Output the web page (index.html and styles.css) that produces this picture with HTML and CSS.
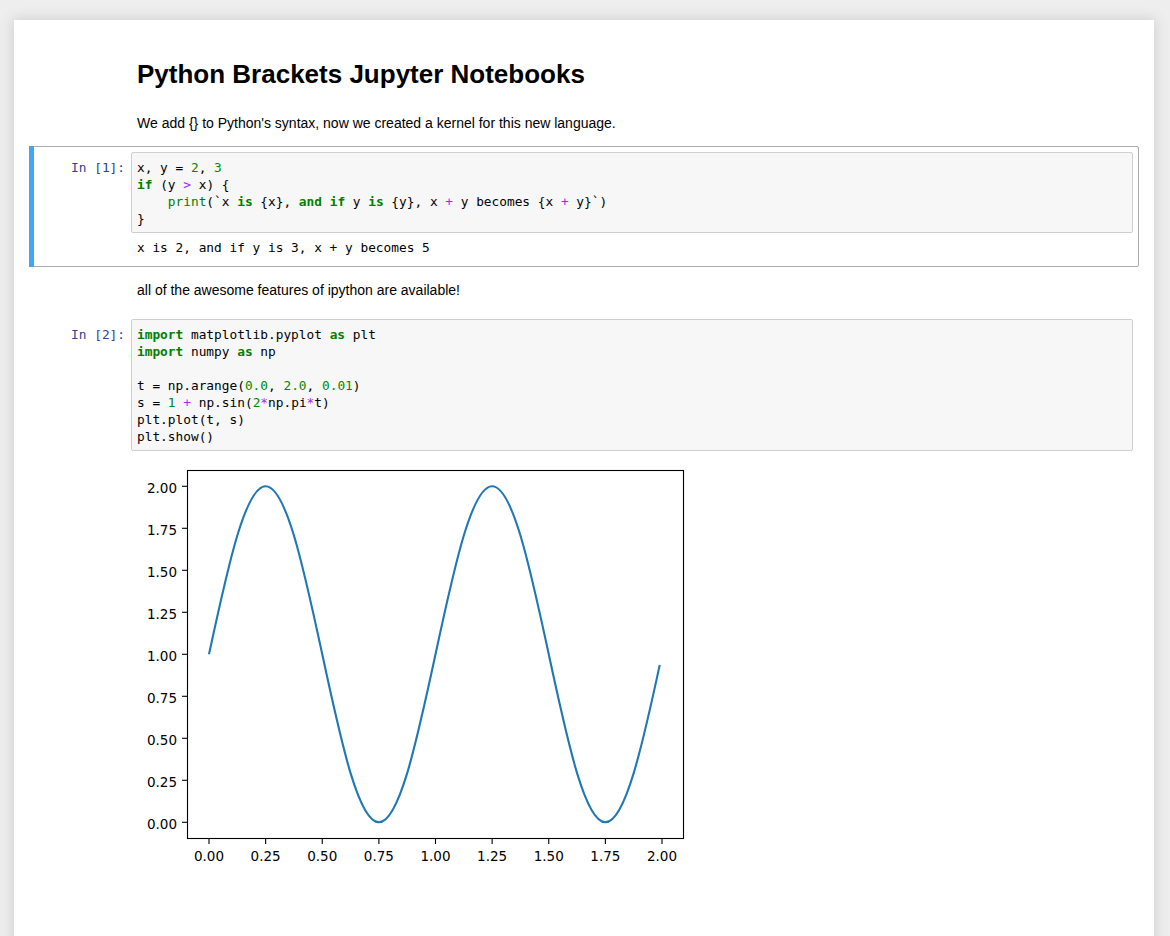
FILE: index.html
```html
<!DOCTYPE html>
<html lang="en">
<head>
<meta charset="utf-8">
<title>Python Brackets Jupyter Notebooks</title>
<link rel="stylesheet" href="styles.css">
</head>
<body>
<div class="notebook">
  <div class="cell text-cell">
    <div class="prompt"></div>
    <div class="render render-first">
      <h1>Python Brackets Jupyter Notebooks</h1>
      <p>We add {} to Python's syntax, now we created a kernel for this new language.</p>
    </div>
  </div>

  <div class="cell code-cell selected">
    <div class="row">
      <div class="prompt in">In&nbsp;[1]:</div>
      <pre class="input-area">x, y = <span class="mi">2</span>, <span class="mi">3</span>
<span class="k">if</span> (y <span class="o">&gt;</span> x) {
    <span class="nb">print</span>(`x <span class="k">is</span> {x}, <span class="k">and</span> <span class="k">if</span> y <span class="k">is</span> {y}, x <span class="o">+</span> y becomes {x <span class="o">+</span> y}`)
}</pre>
    </div>
    <div class="row">
      <div class="prompt"></div>
      <pre class="output-text">x is 2, and if y is 3, x + y becomes 5</pre>
    </div>
  </div>

  <div class="cell text-cell">
    <div class="prompt"></div>
    <div class="render render-plain">
      <p>all of the awesome features of ipython are available!</p>
    </div>
  </div>

  <div class="cell code-cell">
    <div class="row">
      <div class="prompt in">In&nbsp;[2]:</div>
      <pre class="input-area"><span class="k">import</span> matplotlib.pyplot <span class="k">as</span> plt
<span class="k">import</span> numpy <span class="k">as</span> np

t = np.arange(<span class="mi">0.0</span>, <span class="mi">2.0</span>, <span class="mi">0.01</span>)
s = <span class="mi">1</span> <span class="o">+</span> np.sin(<span class="mi">2</span><span class="o">*</span>np.pi<span class="o">*</span>t)
plt.plot(t, s)
plt.show()</pre>
    </div>
    <div class="row">
      <div class="prompt"></div>
      <div class="output-image">
        <svg class="plot" width="560" height="420" viewBox="0 0 560 420" xmlns="http://www.w3.org/2000/svg">
          <rect x="0" y="0" width="560" height="420" fill="#ffffff"/>
          <path d="M72,194.3 C81.44,150.32 90.88,106.61 100.31,75.51 C109.75,44.41 119.19,26.3 128.63,26.3 C138.06,26.3 147.5,44.41 156.94,75.51 C166.38,106.61 175.81,150.32 185.25,194.3 C194.69,238.28 204.12,281.99 213.56,313.09 C223,344.19 232.44,362.3 241.88,362.3 C251.31,362.3 260.75,344.19 270.19,313.09 C279.63,281.99 289.06,238.28 298.5,194.3 C307.94,150.32 317.38,106.61 326.81,75.51 C336.25,44.41 345.69,26.3 355.13,26.3 C364.56,26.3 374,44.41 383.44,75.51 C392.88,106.61 402.31,150.32 411.75,194.3 C421.19,238.28 430.62,281.99 440.06,313.09 C449.5,344.19 458.94,362.3 468.38,362.3 C477.81,362.3 487.25,344.19 496.69,313.09 C505.37,284.48 514.05,245.23 522.74,204.85" fill="none" stroke="#1f77b4" stroke-width="2.1"/>
          <rect x="50.5" y="10.5" width="496" height="368" fill="none" stroke="#000" stroke-width="1.1"/>
          <g stroke="#000" stroke-width="1.1">
            <line x1="72" y1="378.5" x2="72" y2="384"/>
            <line x1="128.63" y1="378.5" x2="128.63" y2="384"/>
            <line x1="185.25" y1="378.5" x2="185.25" y2="384"/>
            <line x1="241.88" y1="378.5" x2="241.88" y2="384"/>
            <line x1="298.5" y1="378.5" x2="298.5" y2="384"/>
            <line x1="355.13" y1="378.5" x2="355.13" y2="384"/>
            <line x1="411.75" y1="378.5" x2="411.75" y2="384"/>
            <line x1="468.38" y1="378.5" x2="468.38" y2="384"/>
            <line x1="525" y1="378.5" x2="525" y2="384"/>
            <line x1="45" y1="362.3" x2="50.5" y2="362.3"/>
            <line x1="45" y1="320.3" x2="50.5" y2="320.3"/>
            <line x1="45" y1="278.3" x2="50.5" y2="278.3"/>
            <line x1="45" y1="236.3" x2="50.5" y2="236.3"/>
            <line x1="45" y1="194.3" x2="50.5" y2="194.3"/>
            <line x1="45" y1="152.3" x2="50.5" y2="152.3"/>
            <line x1="45" y1="110.3" x2="50.5" y2="110.3"/>
            <line x1="45" y1="68.3" x2="50.5" y2="68.3"/>
            <line x1="45" y1="26.3" x2="50.5" y2="26.3"/>
          </g>
          <g class="tick-x" text-anchor="middle">
            <text x="72" y="401">0.00</text>
            <text x="128.63" y="401">0.25</text>
            <text x="185.25" y="401">0.50</text>
            <text x="241.88" y="401">0.75</text>
            <text x="298.5" y="401">1.00</text>
            <text x="355.13" y="401">1.25</text>
            <text x="411.75" y="401">1.50</text>
            <text x="468.38" y="401">1.75</text>
            <text x="525" y="401">2.00</text>
          </g>
          <g class="tick-y" text-anchor="end">
            <text x="40" y="369">0.00</text>
            <text x="40" y="327">0.25</text>
            <text x="40" y="285">0.50</text>
            <text x="40" y="243">0.75</text>
            <text x="40" y="201">1.00</text>
            <text x="40" y="159">1.25</text>
            <text x="40" y="117">1.50</text>
            <text x="40" y="75">1.75</text>
            <text x="40" y="33">2.00</text>
          </g>
        </svg>
      </div>
    </div>
  </div>
</div>
</body>
</html>
```

FILE: styles.css
```css
* {
  box-sizing: border-box;
}

html, body {
  margin: 0;
  padding: 0;
  background: #eeeeee;
}

body {
  font-family: "Liberation Sans", Arial, sans-serif;
  font-size: 14px;
  color: #000;
  overflow: hidden;
}

.notebook {
  width: 1140px;
  min-height: 1000px;
  margin: 20px 16px 0 14px;
  padding: 15px;
  background: #ffffff;
  box-shadow: 0 0 12px 1px rgba(87, 87, 87, 0.2);
}

.cell {
  position: relative;
  border: 1px solid transparent;
  border-radius: 2px;
  padding: 5px;
}

.text-cell {
  display: flex;
}

.cell.selected {
  border-color: #ababab;
}

.cell.selected::before {
  content: "";
  position: absolute;
  left: -1px;
  top: -1px;
  width: 5px;
  height: calc(100% + 2px);
  background: #42a5f5;
}

.row {
  display: flex;
  align-items: flex-start;
}

.prompt {
  flex: 0 0 96px;
  width: 96px;
  padding: 7px 6px 0 0;
  text-align: right;
  font-family: "DejaVu Sans Mono", monospace;
  font-size: 12.8px;
  line-height: 17px;
  color: #303f9f;
  white-space: nowrap;
}

.render {
  flex: 1;
  padding-left: 6px;
}

.render-first {
  padding-top: 20px;
  padding-bottom: 7px;
}

.render-plain {
  padding-top: 7px;
  padding-bottom: 7px;
}

.render h1 {
  margin: 0 0 26px;
  font-size: 26px;
  line-height: 26px;
  font-weight: bold;
}

.render p {
  margin: 0;
  line-height: 20px;
}

.input-area {
  flex: 1;
  margin: 0;
  padding: 6px 5px 5px;
  background: #f7f7f7;
  border: 1px solid #cfcfcf;
  border-radius: 2px;
  font-family: "DejaVu Sans Mono", monospace;
  font-size: 12.8px;
  line-height: 17px;
  color: #000;
  white-space: pre;
}

.output-text {
  flex: 1;
  margin: 0;
  padding: 6px 6px 5px;
  font-family: "DejaVu Sans Mono", monospace;
  font-size: 12.8px;
  line-height: 17px;
  color: #000;
  white-space: pre;
}

.output-image {
  flex: 1;
  padding: 9px 6px 0;
}

.plot {
  display: block;
}

.plot text {
  font-family: "DejaVu Sans", sans-serif;
  font-size: 13.5px;
  fill: #000;
}

.k {
  color: #008000;
  font-weight: bold;
}

.nb {
  color: #008000;
}

.mi {
  color: #008800;
}

.o {
  color: #aa22ff;
}
```
